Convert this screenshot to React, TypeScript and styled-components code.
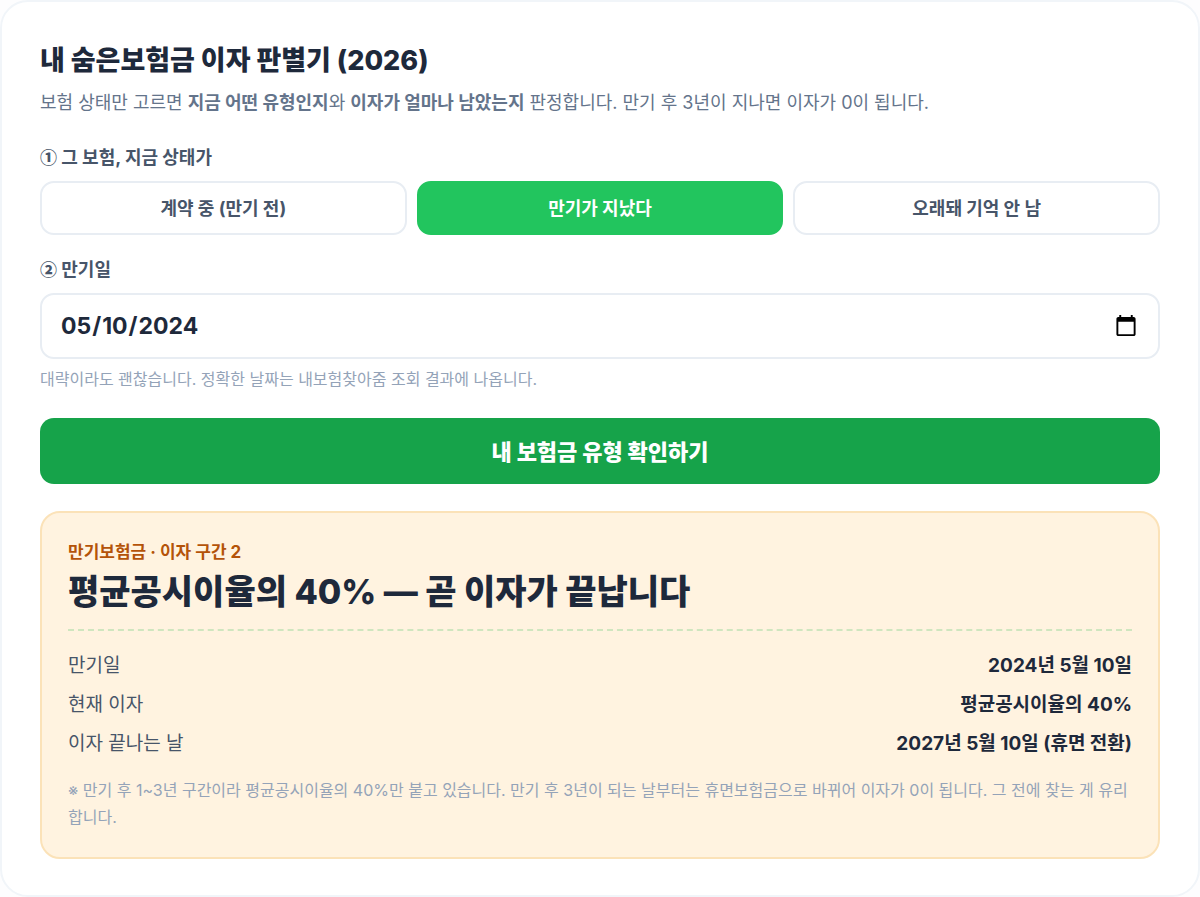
import React, { useState } from "react";
import styled, { createGlobalStyle } from "styled-components";

const GlobalStyle = createGlobalStyle`
  *, *::before, *::after {
    box-sizing: border-box;
  }
  body {
    margin: 0;
    background: #fdfdfe;
    color: #1e293b;
    font-family: Inter, "Noto Sans CJK KR", sans-serif;
  }
  button, input {
    font-family: inherit;
  }
`;

const Card = styled.main`
  padding: 39px 38px 36px;
  background: #ffffff;
  border: 2px solid #f1f5f9;
  border-radius: 28px;
`;

const Title = styled.h1`
  margin: 0;
  font-size: 27px;
  font-weight: 800;
  line-height: 40px;
`;

const Description = styled.p`
  margin: 8px 0 27px;
  color: #64748b;
  font-size: 18px;
  line-height: 28px;
`;

const Fields = styled.div`
  display: grid;
  gap: 21px;
`;

const fieldLabelStyles = `
  display: block;
  margin-bottom: 9px;
  color: #475569;
  font-size: 18px;
  font-weight: 700;
  line-height: 28px;
`;

const GroupLabel = styled.div`
  ${fieldLabelStyles}
`;

const FieldLabel = styled.label`
  ${fieldLabelStyles}
`;

const Step = styled.span`
  font-family: "Noto Sans CJK KR", sans-serif;
  font-size: 17px;
  font-weight: 900;
  line-height: 1;
`;

const Options = styled.div`
  display: grid;
  grid-template-columns: repeat(3, 1fr);
  gap: 10px;
`;

const Option = styled.button<{ $selected: boolean }>`
  height: 54px;
  padding: 0 12px 2px;
  border: 2px solid ${({ $selected }) => ($selected ? "#22c55e" : "#e8edf3")};
  border-radius: 14px;
  background: ${({ $selected }) => ($selected ? "#22c55e" : "#ffffff")};
  color: ${({ $selected }) => ($selected ? "#ffffff" : "#475569")};
  font-size: 18px;
  font-weight: 700;
  cursor: pointer;
`;

const DateInput = styled.input`
  display: block;
  width: 100%;
  height: 66px;
  padding: 0 20px 0 18px;
  border: 2px solid #e8edf3;
  border-radius: 14px;
  background: #ffffff;
  color: #1e293b;
  font-size: 23px;
  font-weight: 700;

  &::-webkit-calendar-picker-indicator {
    width: 24px;
    height: 24px;
    padding: 0;
  }
`;

const Hint = styled.p`
  margin: 8px 0 0;
  color: #94a3b8;
  font-size: 16px;
  line-height: 24px;
`;

const Submit = styled.button`
  display: block;
  width: 100%;
  height: 66px;
  margin-top: 27px;
  padding: 0 12px 2px;
  border: 0;
  border-radius: 14px;
  background: #16a34a;
  color: #ffffff;
  font-size: 22px;
  font-weight: 800;
  cursor: pointer;
`;

const Result = styled.section`
  margin-top: 27px;
  padding: 26px;
  border: 2px solid #fbe2b8;
  border-radius: 20px;
  background: #fff3e0;
`;

const Category = styled.p`
  margin: 0;
  color: #b45309;
  font-size: 17px;
  font-weight: 700;
  line-height: 26px;
`;

const Verdict = styled.h2`
  margin: 4px 0 0;
  font-size: 34px;
  font-weight: 800;
  line-height: 46px;
`;

const Details = styled.dl`
  margin: 14px 0 0;
  padding-top: 15px;
  border-top: 2px dashed #cfe6bf;
`;

const DetailRow = styled.div`
  display: flex;
  justify-content: space-between;
  padding: 4px 0;
  font-size: 19px;
  line-height: 31px;
`;

const DetailName = styled.dt`
  color: #475569;
`;

const DetailValue = styled.dd`
  margin: 0;
  font-weight: 700;
`;

const Note = styled.p`
  margin: 14px 0 0;
  color: #94a3b8;
  font-size: 16px;
  line-height: 27px;
`;

const statuses = ["계약 중 (만기 전)", "만기가 지났다", "오래돼 기억 안 남"];

const details = [
  { name: "만기일", value: "2024년 5월 10일" },
  { name: "현재 이자", value: "평균공시이율의 40%" },
  { name: "이자 끝나는 날", value: "2027년 5월 10일 (휴면 전환)" },
];

export default function App() {
  const [status, setStatus] = useState(statuses[1]);
  const [date, setDate] = useState("2024-05-10");

  return (
    <>
      <GlobalStyle />
      <Card lang="ko">
        <Title>내 숨은보험금 이자 판별기 (2026)</Title>
        <Description>
          보험 상태만 고르면 <strong>지금 어떤 유형인지</strong>와{" "}
          <strong>이자가 얼마나 남았는지</strong> 판정합니다. 만기 후 3년이 지나면 이자가
          0이 됩니다.
        </Description>

        <Fields>
          <section>
            <GroupLabel id="status-label">
              <Step>①</Step> 그 보험, 지금 상태가
            </GroupLabel>
            <Options role="group" aria-labelledby="status-label">
              {statuses.map((item) => (
                <Option
                  key={item}
                  type="button"
                  $selected={item === status}
                  aria-pressed={item === status}
                  onClick={() => setStatus(item)}
                >
                  {item}
                </Option>
              ))}
            </Options>
          </section>

          <section>
            <FieldLabel htmlFor="maturity">
              <Step>②</Step> 만기일
            </FieldLabel>
            <DateInput
              id="maturity"
              type="date"
              value={date}
              aria-describedby="maturity-hint"
              onChange={(event) => setDate(event.target.value)}
            />
            <Hint id="maturity-hint">
              대략이라도 괜찮습니다. 정확한 날짜는 내보험찾아줌 조회 결과에 나옵니다.
            </Hint>
          </section>
        </Fields>

        <Submit type="button">내 보험금 유형 확인하기</Submit>

        <Result aria-live="polite">
          <Category>만기보험금 · 이자 구간 2</Category>
          <Verdict>평균공시이율의 40% — 곧 이자가 끝납니다</Verdict>
          <Details>
            {details.map(({ name, value }) => (
              <DetailRow key={name}>
                <DetailName>{name}</DetailName>
                <DetailValue>{value}</DetailValue>
              </DetailRow>
            ))}
          </Details>
          <Note>
            ※ 만기 후 1~3년 구간이라 평균공시이율의 40%만 붙고 있습니다. 만기 후 3년이 되는
            날부터는 휴면보험금으로 바뀌어 이자가 0이 됩니다. 그 전에 찾는 게 유리합니다.
          </Note>
        </Result>
      </Card>
    </>
  );
}
